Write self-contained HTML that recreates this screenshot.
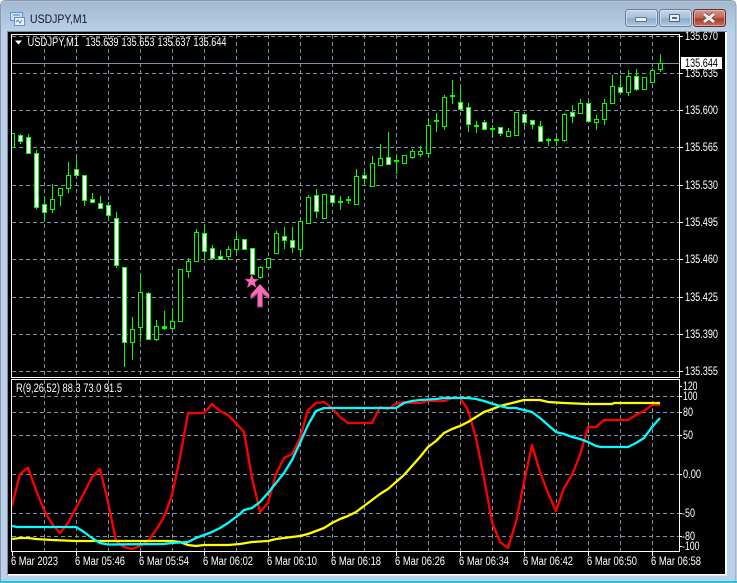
<!DOCTYPE html>
<html>
<head>
<meta charset="utf-8">
<title>USDJPY,M1</title>
<style>
html,body{margin:0;padding:0;background:#fff;width:737px;height:583px;overflow:hidden}
svg{display:block;font-family:"Liberation Sans",sans-serif}
</style>
</head>
<body>
<svg width="737" height="583" viewBox="0 0 737 583" xmlns="http://www.w3.org/2000/svg">
<defs>
<linearGradient id="wf" x1="0" y1="0" x2="0" y2="1"><stop offset="0" stop-color="#a2b8ce"/><stop offset="1" stop-color="#b9d1ea"/></linearGradient>
<linearGradient id="bb" x1="0" y1="0" x2="0" y2="1"><stop offset="0" stop-color="#c6d6e7"/><stop offset=".5" stop-color="#a9c0d8"/><stop offset=".55" stop-color="#8fabc8"/><stop offset="1" stop-color="#b0c9e2"/></linearGradient>
<linearGradient id="rb" x1="0" y1="0" x2="0" y2="1"><stop offset="0" stop-color="#d79c8c"/><stop offset=".5" stop-color="#bf6153"/><stop offset=".55" stop-color="#a8382b"/><stop offset="1" stop-color="#c77262"/></linearGradient>
<clipPath id="cm"><rect x="12" y="35" width="667" height="342"/></clipPath>
<clipPath id="cs"><rect x="12" y="380" width="667" height="172"/></clipPath>
</defs>

<!-- window -->
<rect x="0" y="0" width="737" height="583" fill="#fff"/>
<path d="M6 0.5H730Q736 0.5 736 6.5V583H0.5V6.5Q0.5 0.5 6 0.5Z" fill="#b9d1ea" stroke="#8a97a6"/>
<path d="M6 1.5H730Q735 1.5 735 6.5V32H1.5V6.5Q1.5 1.5 6 1.5Z" fill="url(#wf)"/>
<rect x="0" y="581" width="737" height="2" fill="#25c5d6"/>

<!-- title icon -->
<rect x="10.5" y="12.5" width="12" height="8" fill="#cfe0f5" stroke="#5f92d0"/>
<rect x="14.5" y="17.5" width="10" height="8" fill="#e8f1fb" stroke="#5f92d0"/>
<path d="M13 15h7M16 22l2-2 2 3 2-3" fill="none" stroke="#4a80c4" stroke-width="1"/>
<text x="30" y="23" font-size="12" fill="#1b1236" textLength="57.5" lengthAdjust="spacingAndGlyphs">USDJPY,M1</text>

<!-- buttons -->
<rect x="625.5" y="9.5" width="32" height="17" rx="3" fill="url(#bb)" stroke="#66809c"/>
<rect x="626.5" y="10.5" width="30" height="15" rx="2" fill="none" stroke="#dde8f3" stroke-opacity=".7"/>
<rect x="635.5" y="17.5" width="11" height="4" rx="1" fill="#eef2f6" stroke="#5f7288"/>
<rect x="659.5" y="9.5" width="32" height="17" rx="3" fill="url(#bb)" stroke="#66809c"/>
<rect x="660.5" y="10.5" width="30" height="15" rx="2" fill="none" stroke="#dde8f3" stroke-opacity=".7"/>
<rect x="669.5" y="14.5" width="10" height="7" rx="1" fill="#e8eef4" stroke="#4f6277"/>
<rect x="672" y="17" width="5" height="2" fill="#55687d"/>
<rect x="693.5" y="9.5" width="32" height="17" rx="3" fill="url(#rb)" stroke="#6a2a2a"/>
<rect x="694.5" y="10.5" width="30" height="15" rx="2" fill="none" stroke="#f0c8bc" stroke-opacity=".6"/>
<path d="M704 14L714 22M714 14L704 22" stroke="#5a4a4a" stroke-width="4.4" fill="none"/>
<path d="M704 14L714 22M714 14L704 22" stroke="#f4f0ee" stroke-width="3" fill="none"/>

<!-- client -->
<rect x="7" y="31" width="720" height="544" fill="#fff"/>
<rect x="7" y="31" width="1" height="544" fill="#7f8a96"/>
<rect x="7" y="31" width="720" height="1" fill="#7f8a96"/>
<rect x="8" y="32" width="717" height="542" fill="#000"/>
<rect x="725" y="32" width="2" height="543" fill="#fff"/>
<rect x="8" y="574" width="719" height="1.5" fill="#fff"/>

<!-- grid -->
<g shape-rendering="crispEdges" stroke="#8090a4" stroke-width="1" stroke-dasharray="4 3" fill="none">
<path d="M12 36.5H679M12 73.5H679M12 110.5H679M12 147.5H679M12 185.5H679M12 222.5H679M12 259.5H679M12 297.5H679M12 334.5H679M12 371.5H679"/>
<path d="M44.5 35V377M76.5 35V377M108.5 35V377M140.5 35V377M172.5 35V377M204.5 35V377M236.5 35V377M268.5 35V377M300.5 35V377M332.5 35V377M364.5 35V377M396.5 35V377M428.5 35V377M460.5 35V377M492.5 35V377M524.5 35V377M556.5 35V377M588.5 35V377M620.5 35V377M652.5 35V377"/>
<path d="M12 396.5H679M12 412.5H679M12 435.5H679M12 474.5H679M12 513.5H679M12 536.5H679"/>
<path d="M44.5 380V552M76.5 380V552M108.5 380V552M140.5 380V552M172.5 380V552M204.5 380V552M236.5 380V552M268.5 380V552M300.5 380V552M332.5 380V552M364.5 380V552M396.5 380V552M428.5 380V552M460.5 380V552M492.5 380V552M524.5 380V552M556.5 380V552M588.5 380V552M620.5 380V552M652.5 380V552"/>
</g>
<rect x="12" y="63" width="668" height="1" fill="#8090a4"/>

<!-- candles -->
<g clip-path="url(#cm)" shape-rendering="crispEdges">
<path fill="none" stroke="#00ff00" d="M20.5 134V144M28.5 134V154M36.5 150V209M44.5 196V222M52.5 184V213M60.5 188V206M68.5 162V193M76.5 158V177M84.5 175V206M92.5 193V203M100.5 196V209M108.5 202V221M116.5 212V268M124.5 267V367M132.5 317V360M140.5 274V342M148.5 292V339M156.5 320V341M164.5 311V330M172.5 308V330M188.5 258V278M196.5 229V262M204.5 224V260M212.5 245V260M220.5 250V259M228.5 246V260M236.5 232V253M260.5 266V279M276.5 231V254M284.5 227V249M292.5 227V253M300.5 221V257M308.5 195V223M316.5 189V218M332.5 195V205M340.5 196V210M348.5 196V204M356.5 169V204M364.5 172V185M372.5 156V186M380.5 144V165M388.5 132V164M396.5 154V174M404.5 155V164M412.5 149V159M420.5 146V157M428.5 118V157M436.5 113V132M444.5 95V130M452.5 80V104M460.5 88V109M468.5 103V132M476.5 121V133M484.5 120V129M492.5 125V138M500.5 127V136M508.5 128V136M524.5 114V127M532.5 120V129M540.5 121V141M548.5 138V146M556.5 137V146M564.5 113V142M572.5 105V123M580.5 99V113M588.5 101V123M596.5 115V130M604.5 99V125M612.5 75V104M620.5 75V93M628.5 70V96M636.5 69V91M652.5 68V82M660.5 54V72"/>
<path fill="#000" stroke="#00ff00" d="M10.5 133.5h4v14h-4zM50.5 199.5h4v10h-4zM58.5 188.5h4v7h-4zM66.5 175.5h4v13h-4zM130.5 329.5h4v13h-4zM138.5 292.5h4v35h-4zM154.5 326.5h4v13h-4zM170.5 321.5h4v7h-4zM178.5 269.5h4v52h-4zM186.5 261.5h4v10h-4zM194.5 232.5h4v29h-4zM226.5 249.5h4v7h-4zM234.5 239.5h4v10h-4zM258.5 267.5h4v10h-4zM266.5 258.5h4v9h-4zM274.5 233.5h4v20h-4zM298.5 221.5h4v28h-4zM306.5 197.5h4v26h-4zM322.5 194.5h4v24h-4zM354.5 176.5h4v28h-4zM370.5 163.5h4v23h-4zM378.5 158.5h4v7h-4zM402.5 155.5h4v8h-4zM410.5 151.5h4v6h-4zM418.5 151.5h4v3h-4zM426.5 125.5h4v28h-4zM442.5 97.5h4v29h-4zM506.5 131.5h4v5h-4zM514.5 112.5h4v23h-4zM562.5 114.5h4v26h-4zM578.5 103.5h4v10h-4zM594.5 119.5h4v3h-4zM602.5 103.5h4v16h-4zM610.5 86.5h4v17h-4zM626.5 76.5h4v16h-4zM642.5 77.5h4v12h-4zM650.5 70.5h4v12h-4zM658.5 63.5h4v6h-4z"/>
<path fill="#fff" stroke="#00ff00" d="M18.5 135.5h4v6h-4zM26.5 137.5h4v16h-4zM34.5 153.5h4v54h-4zM42.5 204.5h4v8h-4zM74.5 169.5h4v6h-4zM82.5 175.5h4v25h-4zM90.5 199.5h4v3h-4zM98.5 203.5h4v5h-4zM106.5 205.5h4v10h-4zM114.5 218.5h4v47h-4zM122.5 267.5h4v75h-4zM146.5 293.5h4v46h-4zM202.5 233.5h4v18h-4zM210.5 248.5h4v10h-4zM218.5 256.5h4v3h-4zM242.5 239.5h4v10h-4zM250.5 248.5h4v26h-4zM314.5 195.5h4v16h-4zM282.5 236.5h4v4h-4zM290.5 240.5h4v7h-4zM330.5 195.5h4v7h-4zM362.5 175.5h4v3h-4zM386.5 157.5h4v7h-4zM458.5 102.5h4v7h-4zM466.5 107.5h4v17h-4zM482.5 122.5h4v7h-4zM498.5 127.5h4v6h-4zM522.5 114.5h4v8h-4zM530.5 120.5h4v4h-4zM538.5 126.5h4v15h-4zM570.5 112.5h4v4h-4zM586.5 103.5h4v18h-4zM618.5 87.5h4v5h-4zM634.5 76.5h4v13h-4z"/>
<path fill="#00ff00" d="M162 326h5v3h-5zM338 201h5v2h-5zM346 199h5v2h-5zM394 160h5v2h-5zM434 120h5v2h-5zM450 95h5v2h-5zM474 125h5v2h-5zM490 128h5v2h-5zM546 139h5v2h-5zM554 139h5v2h-5z"/>
</g>

<!-- markers -->
<path d="M251.7 274L253.6 279H259L254.8 282.4L256.4 288L251.7 284.6L247 288L248.6 282.4L244.4 279H249.8Z" fill="#ff69b4" stroke="#5b2a55" stroke-width=".5"/>
<path d="M260 284L269.5 294.5V299.5L263 295V307.5H257V295L250.5 299.5V294.5Z" fill="#7a3f70"/>
<path d="M260 284L269 294.5V298L262 292.5V306.5H258V292.5L251 298V294.5Z" fill="#ff69b4"/>

<!-- chart frames -->
<g shape-rendering="crispEdges" fill="none" stroke="#fff">
<rect x="11.5" y="34.5" width="668" height="343"/>
<rect x="11.5" y="379.5" width="668" height="172"/>
<path d="M680 36.5h3M680 73.5h3M680 110.5h3M680 147.5h3M680 185.5h3M680 222.5h3M680 259.5h3M680 297.5h3M680 334.5h3M680 371.5h3M680 386.5h2M680 396.5h2M680 412.5h2M680 435.5h2M680 474.5h2M680 513.5h2M680 536.5h2M680 546.5h2"/>
<path d="M12.5 552v4M76.5 552v4M140.5 552v4M204.5 552v4M268.5 552v4M332.5 552v4M396.5 552v4M460.5 552v4M524.5 552v4M588.5 552v4M652.5 552v4"/>
</g>

<!-- indicator -->
<g clip-path="url(#cs)" fill="none" stroke-width="2.3" stroke-linejoin="round">
<polyline stroke="#ff0000" points="12,505.7 20,474 28,467.7 36,490 44,510 52,524 60,533 68,523 76,508 84,493 92,477 100,469 108,502 116,541 124,547 132,549 140,546 148,541 156,530 164,517 172,495 180,458 188,413 196,413 204,413 212,404 220,411 228,415 236,423 244,432 252,478 260,512 268,503 276,474 284,458 292,454 300,438 308,410 316,403 324,402 332,408 340,417 348,423 356,423 364,423 372,423 380,407 388,409 396,404 404,402 412,403 420,403 428,401 436,401 444,401 452,398 460,398 468,410 476,438 484,478 492,522 500,542 508,548 516,522 524,482 532,445 540,472 548,493 556,511 564,488 572,475 580,455 588,427 596,427 604,420 612,420 620,420 628,420 636,415 644,411 652,405 660,405"/>
<polyline stroke="#ffff00" points="12,539 20,538 28,538 36,539 52,540 76,541 172,541 180,542 188,545 196,546 204,545 228,545 240,544 252,542 268,541 276,539 292,537 300,536 308,534 316,531 324,528 332,523 340,519 348,516 356,512 364,506 372,500 380,494 388,489 396,482 404,475 412,466 420,457 428,447 436,441 444,433 452,429 460,426 468,422 476,417 484,412 490,410 500,406 508,404 516,402 524,400 532,400 540,400 548,402 564,403 588,404 612,404 614,403 660,403"/>
<polyline stroke="#00ffff" points="12,526 17,527 76,527 84,532 92,538 100,543 108,544.5 164,544 172,543 188,542 196,538 204,535 212,532 220,528 228,523 240,514 244,510 252,508 260,502 268,493 276,483 284,473 292,460 300,443 308,425 316,411 324,408 396,408 404,403 412,401 420,400 436,399 444,398 460,398 468,398 476,399 484,401 490,403 500,406 508,408 516,408 524,410 532,412 540,418 548,425 556,432 564,434 572,437 580,439 588,442 596,446 601,447 628,447 636,443 644,438 652,427 660,418"/>
</g>

<!-- header text -->
<path d="M15 40.5h7l-3.5 4z" fill="#fff"/>
<g font-size="11.5" fill="#fff">
<text x="27.5" y="46" textLength="51.5" lengthAdjust="spacingAndGlyphs">USDJPY,M1</text>
<text x="85.5" y="46" textLength="33" lengthAdjust="spacingAndGlyphs">135.639</text>
<text x="121.5" y="46" textLength="33" lengthAdjust="spacingAndGlyphs">135.653</text>
<text x="157.5" y="46" textLength="33" lengthAdjust="spacingAndGlyphs">135.637</text>
<text x="193.5" y="46" textLength="33" lengthAdjust="spacingAndGlyphs">135.644</text>
<text x="16" y="392" textLength="106" lengthAdjust="spacingAndGlyphs">R(9,26,52) 88.3 73.0 91.5</text>

<!-- price axis -->
<text x="685" y="40" textLength="33" lengthAdjust="spacingAndGlyphs">135.670</text>
<text x="685" y="77" textLength="33" lengthAdjust="spacingAndGlyphs">135.635</text>
<text x="685" y="114" textLength="33" lengthAdjust="spacingAndGlyphs">135.600</text>
<text x="685" y="151" textLength="33" lengthAdjust="spacingAndGlyphs">135.565</text>
<text x="685" y="189" textLength="33" lengthAdjust="spacingAndGlyphs">135.530</text>
<text x="685" y="226" textLength="33" lengthAdjust="spacingAndGlyphs">135.495</text>
<text x="685" y="263" textLength="33" lengthAdjust="spacingAndGlyphs">135.460</text>
<text x="685" y="301" textLength="33" lengthAdjust="spacingAndGlyphs">135.425</text>
<text x="685" y="338" textLength="33" lengthAdjust="spacingAndGlyphs">135.390</text>
<text x="685" y="375" textLength="33" lengthAdjust="spacingAndGlyphs">135.355</text>

<!-- indicator axis -->
<text x="683" y="390" textLength="14.5" lengthAdjust="spacingAndGlyphs">120</text>
<text x="683" y="400" textLength="14.5" lengthAdjust="spacingAndGlyphs">100</text>
<text x="683" y="416" textLength="10" lengthAdjust="spacingAndGlyphs">80</text>
<text x="683" y="439" textLength="10" lengthAdjust="spacingAndGlyphs">50</text>
<text x="683" y="478" textLength="18" lengthAdjust="spacingAndGlyphs">0.00</text>
<text x="682" y="517" textLength="13" lengthAdjust="spacingAndGlyphs">-50</text>
<text x="682" y="540" textLength="13" lengthAdjust="spacingAndGlyphs">-80</text>
<text x="682" y="550" textLength="17.5" lengthAdjust="spacingAndGlyphs">-100</text>

<!-- time axis -->
<text x="11" y="565" textLength="47" lengthAdjust="spacingAndGlyphs">6 Mar 2023</text>
<text x="75" y="565" textLength="50" lengthAdjust="spacingAndGlyphs">6 Mar 05:46</text>
<text x="139" y="565" textLength="50" lengthAdjust="spacingAndGlyphs">6 Mar 05:54</text>
<text x="203" y="565" textLength="50" lengthAdjust="spacingAndGlyphs">6 Mar 06:02</text>
<text x="267" y="565" textLength="50" lengthAdjust="spacingAndGlyphs">6 Mar 06:10</text>
<text x="331" y="565" textLength="50" lengthAdjust="spacingAndGlyphs">6 Mar 06:18</text>
<text x="395" y="565" textLength="50" lengthAdjust="spacingAndGlyphs">6 Mar 06:26</text>
<text x="459" y="565" textLength="50" lengthAdjust="spacingAndGlyphs">6 Mar 06:34</text>
<text x="523" y="565" textLength="50" lengthAdjust="spacingAndGlyphs">6 Mar 06:42</text>
<text x="587" y="565" textLength="50" lengthAdjust="spacingAndGlyphs">6 Mar 06:50</text>
<text x="651" y="565" textLength="50" lengthAdjust="spacingAndGlyphs">6 Mar 06:58</text>
</g>

<!-- current price label -->
<rect x="681" y="57" width="41" height="12" fill="#fff"/>
<text x="685" y="67" font-size="11.5" fill="#000" textLength="33" lengthAdjust="spacingAndGlyphs">135.644</text>
</svg>
</body>
</html>
